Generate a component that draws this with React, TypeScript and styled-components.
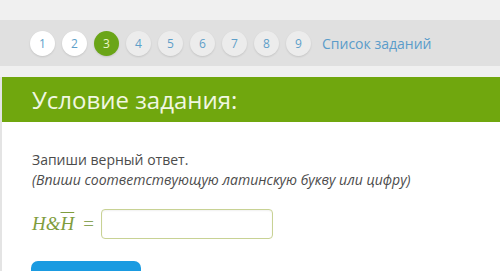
import styled, { createGlobalStyle } from "styled-components";

const GlobalStyle = createGlobalStyle`
  html, body {
    margin: 0;
    padding: 0;
    background: #f0f0f0;
    font-family: "Open Sans", "Liberation Sans", sans-serif;
  }
`;

const tasks = [1, 2, 3, 4, 5, 6, 7, 8, 9];
const current = 3;

function App() {
  return (
    <>
      <GlobalStyle />
      <Page>
        <Nav>
          {tasks.map((n) => (
            <Step key={n} $state={n === current ? "active" : n < current ? "done" : "todo"}>
              {n}
            </Step>
          ))}
          <ListLink>Список заданий</ListLink>
        </Nav>
        <Card>
          <Header>Условие задания:</Header>
          <Body>
            <Text>Запиши верный ответ.</Text>
            <Hint>(Впиши соответствующую латинскую букву или цифру)</Hint>
            <AnswerRow>
              <Formula>
                H&amp;<Over>H</Over>
                <Eq>=</Eq>
              </Formula>
              <Input />
            </AnswerRow>
            <Submit />
          </Body>
        </Card>
      </Page>
    </>
  );
}

export default App;

const Page = styled.div`
  padding-top: 20px;
  height: 271px;
  box-sizing: border-box;
  overflow: hidden;
`;

const Nav = styled.nav`
  height: 46px;
  background: #e0e0e0;
  display: flex;
  align-items: center;
  gap: 7px;
  padding-left: 30px;
  margin-bottom: 11px;
`;

const Step = styled.span<{ $state: "done" | "active" | "todo" }>`
  width: 25px;
  height: 25px;
  border-radius: 50%;
  display: flex;
  align-items: center;
  justify-content: center;
  font-size: 12px;
  background: ${(p) =>
    p.$state === "active" ? "#6aa517" : p.$state === "done" ? "#ffffff" : "#ececec"};
  color: ${(p) => (p.$state === "active" ? "#eaf6c8" : "#5e9fc9")};
  box-shadow: 0 1px 2px rgba(0, 0, 0, 0.12);
`;

const ListLink = styled.a`
  margin-left: 4px;
  font-size: 14px;
  color: #5a9cca;
`;

const Card = styled.section`
  background: #ffffff;
  border-left: 2px solid #e4e4e4;
`;

const Header = styled.h2`
  margin: 0;
  height: 45px;
  background: #70a70e;
  color: #f1f7e2;
  font-size: 24px;
  font-weight: 400;
  display: flex;
  align-items: center;
  padding-left: 30px;
`;

const Body = styled.div`
  padding: 20px 30px 0;
`;

const Text = styled.p`
  margin: 8px 0 0;
  font-size: 14px;
  line-height: 20px;
  color: #4c4c4c;
`;

const Hint = styled(Text)`
  margin: 0;
  font-style: italic;
`;

const AnswerRow = styled.div`
  display: flex;
  align-items: center;
  gap: 7px;
  margin-top: 19px;
`;

const Formula = styled.span`
  font-family: "Liberation Serif", "DejaVu Serif", serif;
  font-style: italic;
  font-size: 19px;
  color: #7f9d3d;
  white-space: pre;
`;

const Over = styled.span`
  text-decoration: overline;
`;

const Eq = styled.span`
  font-style: normal;
  color: #8aa55a;
  margin: 0 0 0 9px;
`;

const Input = styled.input`
  width: 172px;
  height: 30px;
  box-sizing: border-box;
  border: 1.5px solid #c8d294;
  border-radius: 4px;
  background: #fff;
  box-shadow: inset 0 1px 2px rgba(0, 0, 0, 0.06);
`;

const Submit = styled.button`
  display: block;
  margin-top: 22px;
  margin-left: -1px;
  width: 110px;
  height: 36px;
  border: none;
  border-radius: 7px;
  background: #1a9be1;
`;
